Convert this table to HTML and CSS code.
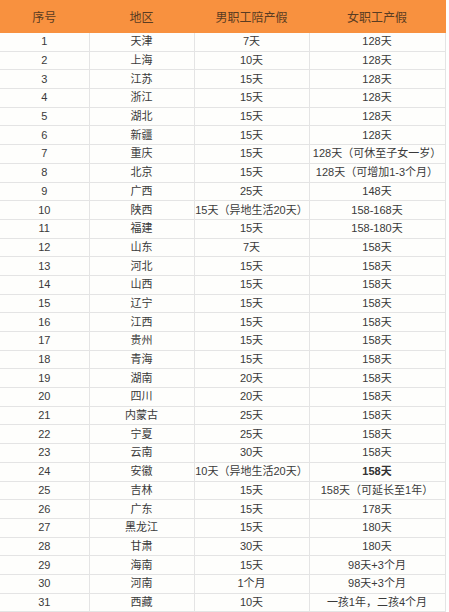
FILE: index.html
```html
<!DOCTYPE html>
<html lang="zh">
<head>
<meta charset="utf-8">
<link rel="stylesheet" href="styles.css">
</head>
<body>
<table class="leave">
<colgroup><col class="c1"><col class="c2"><col class="c3"><col class="c4"></colgroup>
<thead>
<tr><th>序号</th><th>地区</th><th>男职工陪产假</th><th>女职工产假</th></tr>
</thead>
<tbody>
<tr><td>1</td><td>天津</td><td>7天</td><td>128天</td></tr>
<tr><td>2</td><td>上海</td><td>10天</td><td>128天</td></tr>
<tr><td>3</td><td>江苏</td><td>15天</td><td>128天</td></tr>
<tr><td>4</td><td>浙江</td><td>15天</td><td>128天</td></tr>
<tr><td>5</td><td>湖北</td><td>15天</td><td>128天</td></tr>
<tr><td>6</td><td>新疆</td><td>15天</td><td>128天</td></tr>
<tr><td>7</td><td>重庆</td><td>15天</td><td>128天（可休至子女一岁）</td></tr>
<tr><td>8</td><td>北京</td><td>15天</td><td>128天（可增加1-3个月）</td></tr>
<tr><td>9</td><td>广西</td><td>25天</td><td>148天</td></tr>
<tr><td>10</td><td>陕西</td><td>15天（异地生活20天）</td><td>158-168天</td></tr>
<tr><td>11</td><td>福建</td><td>15天</td><td>158-180天</td></tr>
<tr><td>12</td><td>山东</td><td>7天</td><td>158天</td></tr>
<tr><td>13</td><td>河北</td><td>15天</td><td>158天</td></tr>
<tr><td>14</td><td>山西</td><td>15天</td><td>158天</td></tr>
<tr><td>15</td><td>辽宁</td><td>15天</td><td>158天</td></tr>
<tr><td>16</td><td>江西</td><td>15天</td><td>158天</td></tr>
<tr><td>17</td><td>贵州</td><td>15天</td><td>158天</td></tr>
<tr><td>18</td><td>青海</td><td>15天</td><td>158天</td></tr>
<tr><td>19</td><td>湖南</td><td>20天</td><td>158天</td></tr>
<tr><td>20</td><td>四川</td><td>20天</td><td>158天</td></tr>
<tr><td>21</td><td>内蒙古</td><td>25天</td><td>158天</td></tr>
<tr><td>22</td><td>宁夏</td><td>25天</td><td>158天</td></tr>
<tr><td>23</td><td>云南</td><td>30天</td><td>158天</td></tr>
<tr><td>24</td><td>安徽</td><td>10天（异地生活20天）</td><td class="strong">158天</td></tr>
<tr><td>25</td><td>吉林</td><td>15天</td><td>158天（可延长至1年）</td></tr>
<tr><td>26</td><td>广东</td><td>15天</td><td>178天</td></tr>
<tr><td>27</td><td>黑龙江</td><td>15天</td><td>180天</td></tr>
<tr><td>28</td><td>甘肃</td><td>30天</td><td>180天</td></tr>
<tr><td>29</td><td>海南</td><td>15天</td><td>98天+3个月</td></tr>
<tr><td>30</td><td>河南</td><td>1个月</td><td>98天+3个月</td></tr>
<tr><td>31</td><td>西藏</td><td>10天</td><td>一孩1年，二孩4个月</td></tr>
</tbody>
</table>
</body>
</html>
```
FILE: styles.css
```css
html, body {
  margin: 0;
  padding: 0;
  background: #ffffff;
}
body {
  width: 449px;
  height: 612px;
  overflow: hidden;
  font-family: "Liberation Sans", "Noto Sans CJK SC", sans-serif;
  color: #3a3a3a;
}
.leave {
  width: 445px;
  border-collapse: collapse;
  table-layout: fixed;
}
.c1 { width: 89px; }
.c2 { width: 105px; }
.c3 { width: 115px; }
.c4 { width: 136px; }
.leave th {
  background: #f8913f;
  color: #5a3c22;
  font-weight: normal;
  font-size: 12px;
  height: 33px;
  padding: 0;
  text-align: center;
  border-right: 1px solid #f8913f;
}
.leave td {
  height: 17.7px;
  padding: 0;
  font-size: 11px;
  line-height: 17px;
  text-align: center;
  white-space: nowrap;
  border: 1px solid #e4e4e4;
  border-top: none;
  background: #fefefc;
}
.leave td:first-child { border-left: none; }
.leave td.strong { font-weight: bold; color: #333; }
```
